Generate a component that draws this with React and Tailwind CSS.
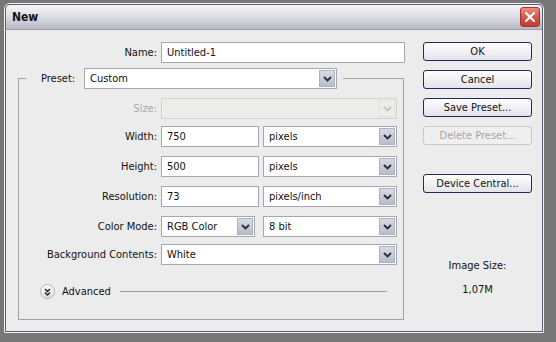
import React from 'react';

const Chevron = ({ color = '#2b2b33' }) => (
  <svg width="9" height="6" viewBox="0 0 9 6">
    <path d="M1 1 L4.5 4.5 L8 1" fill="none" stroke={color} strokeWidth="1.8" />
  </svg>
);

const Select = ({ value, width, disabled, className = '' }) => (
  <div
    className={`flex items-center h-[21px] border pl-[5px] pr-[1px] ${
      disabled ? 'bg-[#ececea] border-[#d2d2cc]' : 'bg-white border-[#a4a8b4]'
    } ${className}`}
    style={{ width }}
  >
    <span className="flex-1 truncate">{value}</span>
    <span
      className={`flex items-center justify-center w-[16px] h-[17px] border ${
        disabled
          ? 'bg-[#ececea] border-[#e2e2de]'
          : 'bg-gradient-to-b from-[#d8dae4] to-[#b9bdcb] border-[#aeb2c0]'
      }`}
    >
      <Chevron color={disabled ? '#c4c4c0' : '#2b2b33'} />
    </span>
  </div>
);

const Input = ({ value, width }) => (
  <div
    className="flex items-center h-[21px] border border-[#a4a8b4] bg-white pl-[5px]"
    style={{ width }}
  >
    {value}
  </div>
);

const Row = ({ label, className = '', disabled, children }) => (
  <div className={`flex items-center gap-[4px] ${className}`}>
    <span className={`w-[138px] text-right ${disabled ? 'text-[#a8a8a8]' : ''}`}>{label}</span>
    {children}
  </div>
);

const Button = ({ children, disabled, className = '' }) => (
  <div
    className={`flex items-center justify-center w-[109px] h-[19px] rounded-[3px] border ${
      disabled
        ? 'border-[#c9c9c4] text-[#a6a6a6] bg-[#efefef]'
        : 'border-[#1f2b58] bg-gradient-to-b from-white to-[#e3e3ea]'
    } ${className}`}
  >
    {children}
  </div>
);

export default function App() {
  return (
    <div className="w-[556px] h-[342px] bg-[#777777] pt-[3px] pl-[4px] font-['DejaVu_Sans_Condensed','DejaVu_Sans',sans-serif] text-[11px] leading-[13px] text-[#111]">
      <div className="w-[540px] h-[330px] border border-[#f2f2f6] rounded-t-[6px] flex flex-col">
        <div className="flex-1 border border-[#5e5e70] rounded-t-[5px] flex flex-col overflow-hidden">
          {/* title bar */}
          <div className="h-[25px] flex items-center pl-[6px] pr-[2px] border-b border-[#9c9cab] bg-gradient-to-b from-[#f6f6f9] via-[#dcdce4] to-[#b7b7c5]">
            <span className="font-bold text-[12px]">New</span>
            <div className="ml-auto w-[20px] h-[20px] rounded-[3px] border border-[#9a3a32] bg-gradient-to-b from-[#e88f82] via-[#d4574a] to-[#bf3e31] flex items-center justify-center">
              <svg width="12" height="12" viewBox="0 0 12 12">
                <path d="M2 2 L10 10 M10 2 L2 10" stroke="white" strokeWidth="2.2" strokeLinecap="round" />
              </svg>
            </div>
          </div>

          {/* body */}
          <div className="flex-1 bg-[#ececec] flex pl-[12px]">
            <div className="flex flex-col pt-[12px]">
              <div className="flex items-center gap-[4px]">
                <span className="w-[139px] text-right">Name:</span>
                <Input value="Untitled-1" width={244} />
              </div>

              <fieldset className="mt-[5px] w-[386px] border border-[#a2a2a2] pb-[20px]">
                <legend className="ml-[7px] pl-[15px] pr-[6px] flex items-center">
                  <span className="w-[43px]">Preset:</span>
                  <Select value="Custom" width={253} />
                </legend>

                <Row label="Size:" disabled className="mt-[9px]">
                  <Select value="" width={236} disabled />
                </Row>
                <Row label="Width:" className="mt-[7px]">
                  <Input value="750" width={98} />
                  <Select value="pixels" width={134} />
                </Row>
                <Row label="Height:" className="mt-[9px]">
                  <Input value="500" width={98} />
                  <Select value="pixels" width={134} />
                </Row>
                <Row label="Resolution:" className="mt-[9px]">
                  <Input value="73" width={98} />
                  <Select value="pixels/inch" width={134} />
                </Row>
                <Row label="Color Mode:" className="mt-[9px]">
                  <Select value="RGB Color" width={94} />
                  <Select value="8 bit" width={134} className="ml-[4px]" />
                </Row>
                <Row label="Background Contents:" className="mt-[7px]">
                  <Select value="White" width={236} />
                </Row>

                <div className="flex items-center mt-[19px] pl-[21px] pr-[16px]">
                  <span className="w-[15px] h-[15px] rounded-full border border-[#b4b4b4] bg-gradient-to-b from-white to-[#dcdcdc] flex items-center justify-center">
                    <svg width="7" height="8" viewBox="0 0 7 8">
                      <path d="M1 1 L3.5 3.5 L6 1 M1 4.5 L3.5 7 L6 4.5" fill="none" stroke="#222" strokeWidth="1.4" />
                    </svg>
                  </span>
                  <span className="ml-[7px]">Advanced</span>
                  <span className="flex-1 ml-[9px] h-px bg-[#9e9e9e]" />
                </div>
              </fieldset>
            </div>

            <div className="ml-[18px] pt-[12px] flex flex-col">
              <Button>OK</Button>
              <Button className="mt-[9px]">Cancel</Button>
              <Button className="mt-[9px]">Save Preset...</Button>
              <Button disabled className="mt-[9px]">Delete Preset...</Button>
              <Button className="mt-[29px]">Device Central...</Button>
              <div className="mt-[66px] text-center">Image Size:</div>
              <div className="mt-[11px] text-center">1,07M</div>
            </div>
          </div>
        </div>
      </div>
    </div>
  );
}
